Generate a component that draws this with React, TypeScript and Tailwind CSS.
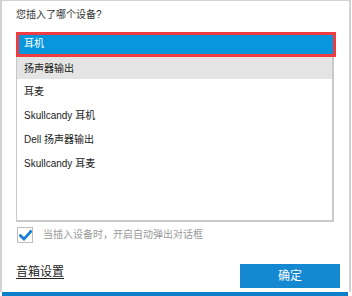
const devices = ["耳机", "扬声器输出", "耳麦", "Skullcandy 耳机", "Dell 扬声器输出", "Skullcandy 耳麦"];

const font = { fontFamily: '"Liberation Sans", "Noto Sans CJK SC", sans-serif' };

export default function App() {
  return (
    <div className="w-[352px] h-[296px] bg-white overflow-hidden" style={font}>
      <div className="w-[351px] h-[292px] border-t border-l-2 border-r-2 border-[#d2d2d2] flex flex-col pl-[14px] pr-[9px]">
        <div className="mt-[8px] h-[12px] leading-[12px] text-[10px] text-[#333]">您插入了哪个设备?</div>

        {/* device list */}
        <div className="mt-[11px] w-[318px] h-[190px] border-l border-b-2 border-r-2 border-[#c9c9c9] flex flex-col">
          {devices.map((name, i) => {
            if (i === 0) {
              return (
                <div
                  key={name}
                  className="h-[25px] -ml-px mr-[-4px] border-[3px] border-[#ef3b42] bg-[#0897dc] text-white text-[10px] flex items-center pl-[5px] pb-[2px] shrink-0"
                >
                  {name}
                </div>
              );
            }
            return (
              <div
                key={name}
                className={`${i === 1 ? "h-[22px] bg-[#e4e4e4]" : "h-[24px]"} shrink-0 flex items-center pl-[7px] text-[10px] text-[#222]`}
              >
                {name}
              </div>
            );
          })}
        </div>

        {/* auto popup option */}
        <div className="mt-[5px] h-[16px] flex items-center gap-[10px] pl-px">
          <div className="w-[16px] h-[16px] border border-[#bdbdbd] bg-white flex items-center justify-center shrink-0">
            <svg width="13" height="13" viewBox="0 0 12 12">
              <path d="M1.4 6.2 L4.6 9.3 L10.8 2.4" fill="none" stroke="#1a7fd4" strokeWidth="2.6" strokeLinecap="square" />
            </svg>
          </div>
          <span className="text-[10px] text-[#9a9a9a] leading-[12px]">当插入设备时，开启自动弹出对话框</span>
        </div>

        <div className="mt-[21px] flex items-start justify-between">
          <span className="mt-px text-[12px] leading-[14px] text-[#222] underline underline-offset-2">音箱设置</span>
          <button className="w-[100px] h-[24px] bg-[#1488d0] text-white text-[12px] flex items-center justify-center">
            确定
          </button>
        </div>
      </div>
      <div className="ml-[2px] w-[346px] h-[4px] bg-[#0b7fc8]" />
    </div>
  );
}
